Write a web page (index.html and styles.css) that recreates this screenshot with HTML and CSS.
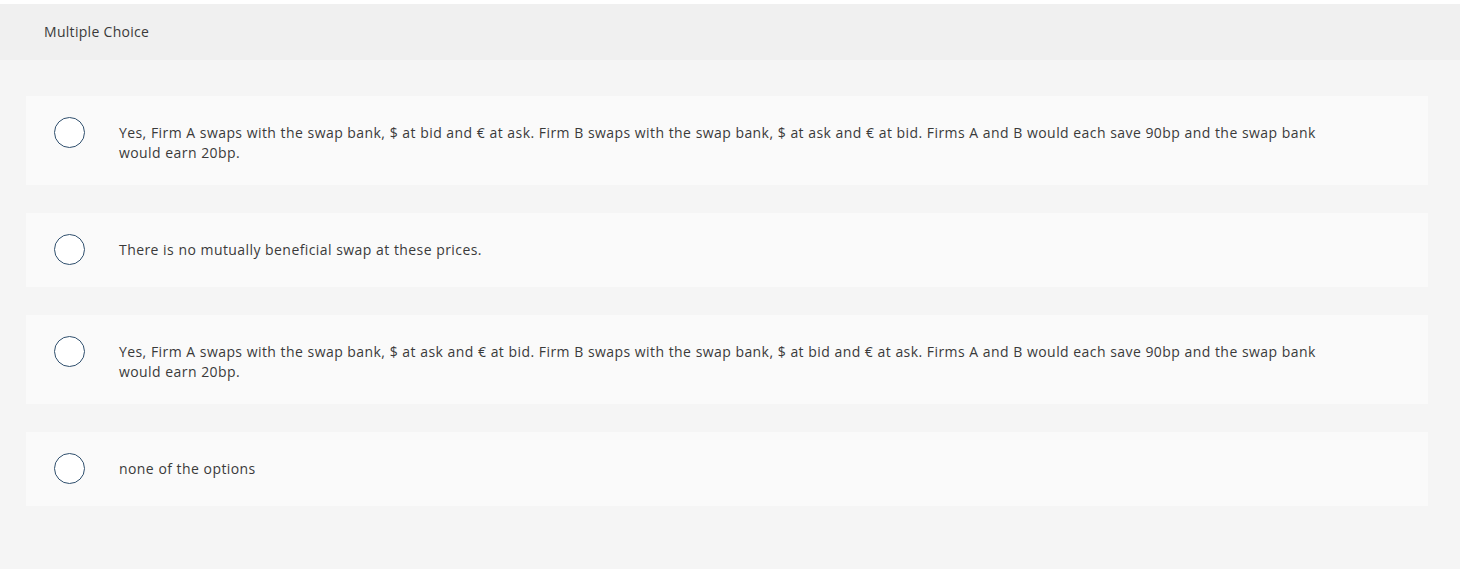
FILE: index.html
```html
<!DOCTYPE html>
<html lang="en">
<head>
<meta charset="utf-8">
<title>Multiple Choice</title>
<link rel="stylesheet" href="styles.css">
</head>
<body>
<div class="panel">
  <div class="panel-header">Multiple Choice</div>
  <div class="choices">
    <div class="choice">
      <span class="radio"></span>
      <div class="choice-text">Yes, Firm A swaps with the swap bank, $ at bid and € at ask. Firm B swaps with the swap bank, $ at ask and € at bid. Firms A and B would each save 90bp and the swap bank would earn 20bp.</div>
    </div>
    <div class="choice">
      <span class="radio"></span>
      <div class="choice-text">There is no mutually beneficial swap at these prices.</div>
    </div>
    <div class="choice">
      <span class="radio"></span>
      <div class="choice-text">Yes, Firm A swaps with the swap bank, $ at ask and € at bid. Firm B swaps with the swap bank, $ at bid and € at ask. Firms A and B would each save 90bp and the swap bank would earn 20bp.</div>
    </div>
    <div class="choice">
      <span class="radio"></span>
      <div class="choice-text">none of the options</div>
    </div>
  </div>
</div>
</body>
</html>
```
FILE: styles.css
```css
html, body {
  margin: 0;
  padding: 0;
  background: #ffffff;
  height: 100%;
}
body {
  font-family: "Open Sans", "Liberation Sans", sans-serif;
  font-size: 14px;
  letter-spacing: 0.42px;
  color: #3a3a3a;
}
.panel {
  margin-top: 4px;
  width: 1460px;
  min-height: 565px;
  background: #f5f5f5;
}
.panel-header {
  height: 56px;
  line-height: 56px;
  padding-left: 44px;
  background: #f0f0f0;
  letter-spacing: 0.3px;
}
.choices {
  display: flex;
  flex-direction: column;
  gap: 28px;
  padding: 36px 32px 0 26px;
}
.choice {
  display: flex;
  align-items: flex-start;
  background: #fafafa;
  padding: 21px 90px 22px 28px;
}
.radio {
  flex: none;
  width: 29px;
  height: 29px;
  border: 1px solid #2f4f6d;
  border-radius: 50%;
  background: #ffffff;
}
.choice-text {
  margin-left: 34px;
  padding-top: 6px;
  line-height: 20px;
  word-spacing: 0.2px;
}
```
